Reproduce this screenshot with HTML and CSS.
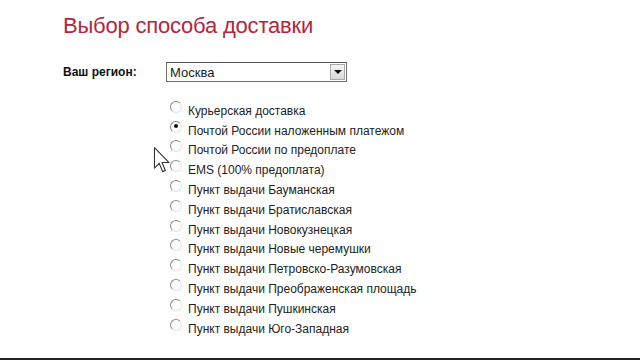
FILE: index.html
```html
<!DOCTYPE html>
<html lang="ru">
<head>
    <meta charset="UTF-8">
    <title>Выбор способа доставки</title>
    <link rel="stylesheet" href="styles.css">
</head>
<body>
    <div class="page">
        <h1>Выбор способа доставки</h1>
        <div class="region">
            <label class="region-label">Ваш регион:</label>
            <div class="select">
                <span class="select-value">Москва</span>
                <span class="select-btn"><span class="arrow"></span></span>
            </div>
        </div>
        <ul class="methods">
            <li><span class="radio"></span>Курьерская доставка</li>
            <li><span class="radio checked"></span>Почтой России наложенным платежом</li>
            <li><span class="radio"></span>Почтой России по предоплате</li>
            <li><span class="radio"></span>EMS (100% предоплата)</li>
            <li><span class="radio"></span>Пункт выдачи Бауманская</li>
            <li><span class="radio"></span>Пункт выдачи Братиславская</li>
            <li><span class="radio"></span>Пункт выдачи Новокузнецкая</li>
            <li><span class="radio"></span>Пункт выдачи Новые черемушки</li>
            <li><span class="radio"></span>Пункт выдачи Петровско-Разумовская</li>
            <li><span class="radio"></span>Пункт выдачи Преображенская площадь</li>
            <li><span class="radio"></span>Пункт выдачи Пушкинская</li>
            <li><span class="radio"></span>Пункт выдачи Юго-Западная</li>
        </ul>
        <!-- mouse pointer from the screen capture -->
        <svg class="cursor" width="18" height="26" viewBox="0 0 12 19">
            <path d="M0.5 0.5 L0.5 15.5 L4 12 L6.5 18 L8.5 17.2 L6 11.3 L11 11.3 Z" fill="#fff" stroke="#333" stroke-width="0.8" stroke-linejoin="round"/>
        </svg>
    </div>
    <div class="bottom-bar"></div>
</body>
</html>
```

FILE: styles.css
```css
html, body {
    margin: 0;
    padding: 0;
    background: #fff;
}
body {
    width: 640px;
    height: 360px;
    overflow: hidden;
    display: flex;
    flex-direction: column;
    font-family: "Liberation Sans", Arial, sans-serif;
    color: #222;
}
.page {
    flex: 1;
    position: relative;
    padding: 11px 0 0 63px;
}
h1 {
    margin: 0;
    font-size: 22px;
    letter-spacing: -0.2px;
    font-weight: normal;
    color: #b3263b;
    line-height: 30px;
}
.region {
    display: flex;
    align-items: center;
    margin-top: 21px;
}
.region-label {
    width: 103px;
    font-size: 12px;
    font-weight: bold;
    color: #111;
}
.select {
    width: 179px;
    height: 18px;
    border: 1px solid #6e6e6e;
    border-top-color: #555;
    display: flex;
    align-items: center;
    justify-content: space-between;
}
.select-value {
    font-size: 13px;
    padding-left: 3px;
}
.select-btn {
    width: 15px;
    height: 16px;
    margin-right: 1px;
    background: linear-gradient(#f4f4f4, #d8d8d8);
    border: 1px solid #aaa;
    box-sizing: border-box;
    display: flex;
    align-items: center;
    justify-content: center;
}
.arrow {
    width: 0;
    height: 0;
    border-left: 4px solid transparent;
    border-right: 4px solid transparent;
    border-top: 4px solid #111;
}
.methods {
    list-style: none;
    margin: 19px 0 0 107px;
    padding: 0;
}
.methods li {
    height: 19.8px;
    display: flex;
    align-items: center;
    font-size: 12px;
    color: #222;
}
.radio {
    width: 12px;
    height: 12px;
    border-radius: 50%;
    border: 1.5px solid #8a8a8a;
    border-right-color: #e2e2e2;
    border-bottom-color: #e2e2e2;
    box-sizing: border-box;
    margin: 0 6px 0 0;
    position: relative;
    top: -4px;
    background: #fff;
}
.radio.checked::after {
    content: "";
    position: absolute;
    left: 2.5px;
    top: 2.5px;
    width: 4px;
    height: 4px;
    border-radius: 50%;
    background: #111;
}
.cursor {
    position: absolute;
    left: 153px;
    top: 147px;
}
.bottom-bar {
    height: 2px;
    background: #222;
}
```
